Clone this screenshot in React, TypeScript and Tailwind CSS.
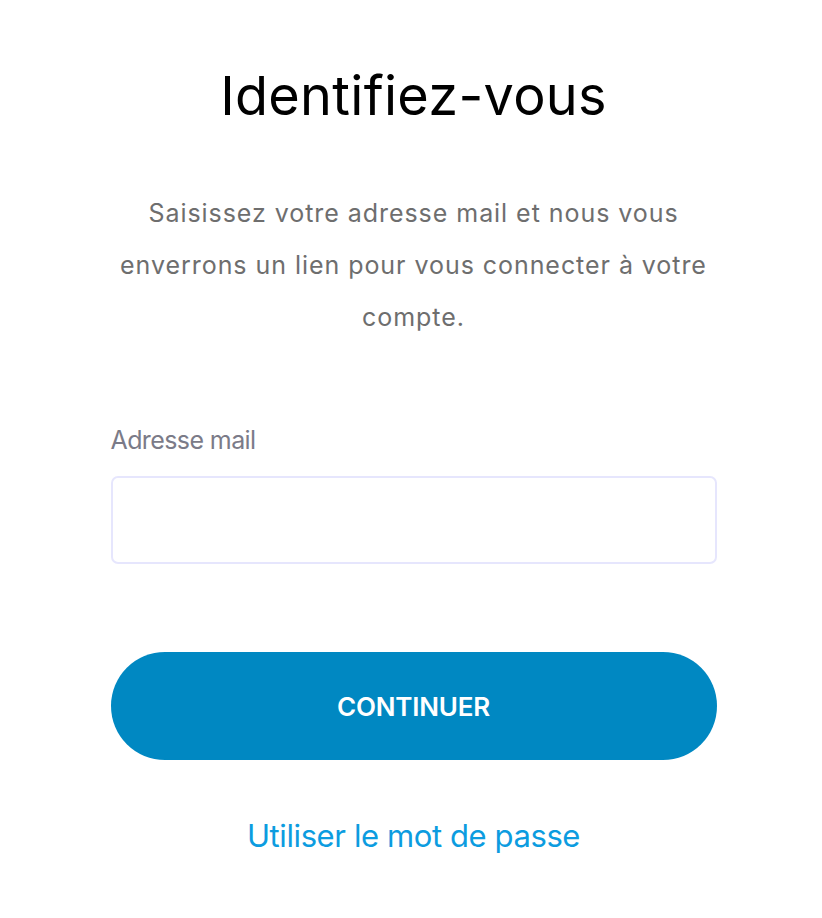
export default function App() {
  return (
    <div
      className="min-h-[918px] w-full bg-white"
      style={{ fontFamily: "Inter, 'Noto Sans', sans-serif" }}
    >
      <div className="flex justify-center pl-[5px]">
        <div className="flex w-[606px] flex-col pt-[63px]">
          <h1 className="text-center text-[54px] leading-[66px] font-normal tracking-[0.3px] text-black">
            Identifiez-vous
          </h1>
          <p className="mx-auto mt-[58px] w-[604px] text-center text-[25px] leading-[52px] tracking-[0.95px] text-[#6e6e6e]">
            Saisissez votre adresse mail et nous vous enverrons un lien pour vous connecter à votre compte.
          </p>
          <label className="mt-[82px] text-[25px] leading-[30px] tracking-[-0.6px] text-[#7b7b88]">
            Adresse mail
          </label>
          <input
            type="email"
            className="mt-[21px] h-[88px] w-[606px] rounded-[7px] border-2 border-[#e6e6fd] bg-white outline-none"
          />
          <button className="mt-[88px] h-[108px] w-[606px] rounded-full bg-[#0088c2] text-[26px] font-semibold tracking-[-0.2px] text-white">
            CONTINUER
          </button>
          <a className="mt-[56px] text-center text-[31px] leading-[40px] tracking-[-0.4px] text-[#0c9ce0]">
            Utiliser le mot de passe
          </a>
        </div>
      </div>
    </div>
  );
}
